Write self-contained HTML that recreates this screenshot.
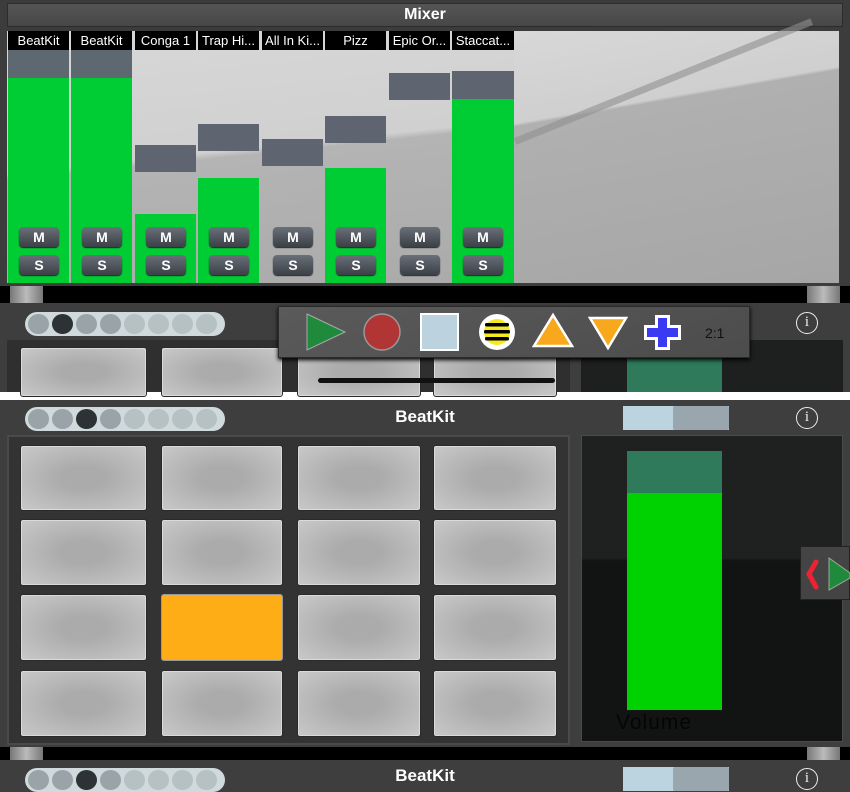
<!DOCTYPE html>
<html><head><meta charset="utf-8"><style>
*{margin:0;padding:0;box-sizing:border-box}
body{width:850px;height:792px;overflow:hidden;background:#fff;font-family:"Liberation Sans",sans-serif;position:relative}
.a{position:absolute}
.pill{position:absolute;width:200px;height:24px;background:#d0dadd;border-radius:12px}
.pill i{position:absolute;top:2px;width:21px;height:20px;border-radius:50%;background:#b6c1c4}
.pad{position:absolute;background:radial-gradient(ellipse at center,#ababab 25%,#c9c9c9 100%);border:1px solid #2a2a2a;border-radius:3px;box-shadow:inset 0 0 0 1px #dadada}
.name{position:absolute;top:31px;height:19px;background:#000;color:#fff;font-size:13px;text-align:center;line-height:19px;white-space:nowrap;overflow:hidden}
.btn{position:absolute;width:40px;height:20px;border-radius:4px;background:linear-gradient(#6a7078,#3b4047);color:#fff;font-weight:bold;font-size:14px;text-align:center;line-height:20px;box-shadow:0 1px 1px #222}
.info{position:absolute;width:22px;height:22px;border:1.5px solid #eee;border-radius:50%;color:#eee;font-size:15px;text-align:center;line-height:19px;font-family:"Liberation Serif",serif}
.foot{position:absolute;width:33px;background:linear-gradient(90deg,#777,#bbb,#777)}
</style></head><body>
<div class="a" style="left:0;top:0;width:850px;height:392px;background:#3c3c3c"></div>
<div class="a" style="left:7px;top:3px;width:836px;height:24px;background:linear-gradient(#555,#474747);border:1px solid #2c2c2c;color:#fff;font-weight:bold;font-size:16px;text-align:center;line-height:22px">Mixer</div>
<div class="a" style="left:7px;top:31px;width:832px;height:252px;background:linear-gradient(174deg,#d8d8d8 0%,#d0d0d0 42%,#b4b4b4 44%,#a8a8a8 100%)"></div>
<div class="a" style="left:514px;top:31px;width:325px;height:252px;background:linear-gradient(170deg,#d8d8d8 0%,#cfcfcf 30%,#b0b0b0 31%,#a6a6a6 100%)"></div>
<div class="a" style="left:515px;top:138px;width:320px;height:7px;background:#8f8f8f;transform:rotate(-22deg);transform-origin:left;opacity:.6"></div>
<div class="a" style="left:8px;top:50px;width:61px;height:28px;background:#5e6870"></div><div class="a" style="left:8px;top:78px;width:61px;height:205px;background:#00cc33"></div>
<div class="a" style="left:71px;top:50px;width:61px;height:28px;background:#5e6870"></div><div class="a" style="left:71px;top:78px;width:61px;height:205px;background:#00cc33"></div>
<div class="a" style="left:135px;top:145px;width:61px;height:27px;background:#5e6570"></div><div class="a" style="left:135px;top:214px;width:61px;height:69px;background:#00cc33"></div>
<div class="a" style="left:198px;top:124px;width:61px;height:27px;background:#5e6570"></div><div class="a" style="left:198px;top:178px;width:61px;height:105px;background:#00cc33"></div>
<div class="a" style="left:262px;top:139px;width:61px;height:27px;background:#5e6570"></div>
<div class="a" style="left:325px;top:116px;width:61px;height:27px;background:#5e6570"></div><div class="a" style="left:325px;top:168px;width:61px;height:115px;background:#00cc33"></div>
<div class="a" style="left:389px;top:73px;width:61px;height:27px;background:#5e6570"></div>
<div class="a" style="left:452px;top:71px;width:62px;height:28px;background:#5e6570"></div><div class="a" style="left:452px;top:99px;width:62px;height:184px;background:#00cc33"></div>
<div class="name" style="left:8px;width:61px">BeatKit</div>
<div class="name" style="left:71px;width:61px">BeatKit</div>
<div class="name" style="left:135px;width:61px">Conga 1</div>
<div class="name" style="left:198px;width:61px">Trap Hi...</div>
<div class="name" style="left:262px;width:61px">All In Ki...</div>
<div class="name" style="left:325px;width:61px">Pizz</div>
<div class="name" style="left:389px;width:61px">Epic Or...</div>
<div class="name" style="left:452px;width:62px">Staccat...</div>
<div class="btn" style="left:19px;top:227px">M</div><div class="btn" style="left:19px;top:255px">S</div>
<div class="btn" style="left:82px;top:227px">M</div><div class="btn" style="left:82px;top:255px">S</div>
<div class="btn" style="left:146px;top:227px">M</div><div class="btn" style="left:146px;top:255px">S</div>
<div class="btn" style="left:209px;top:227px">M</div><div class="btn" style="left:209px;top:255px">S</div>
<div class="btn" style="left:273px;top:227px">M</div><div class="btn" style="left:273px;top:255px">S</div>
<div class="btn" style="left:336px;top:227px">M</div><div class="btn" style="left:336px;top:255px">S</div>
<div class="btn" style="left:400px;top:227px">M</div><div class="btn" style="left:400px;top:255px">S</div>
<div class="btn" style="left:463px;top:227px">M</div><div class="btn" style="left:463px;top:255px">S</div>
<div class="a" style="left:0;top:286px;width:850px;height:17px;background:#000"></div>
<div class="foot" style="left:10px;top:286px;height:17px"></div>
<div class="foot" style="left:807px;top:286px;height:17px"></div>
<div class="a" style="left:0;top:303px;width:850px;height:89px;background:#3e3e3e"></div>
<div class="pill" style="left:25px;top:312px"><i style="left:3px;background:#9aa3a8"></i><i style="left:27px;background:#2d3335"></i><i style="left:51px;background:#9aa3a8"></i><i style="left:75px;background:#9aa3a8"></i><i style="left:99px"></i><i style="left:123px"></i><i style="left:147px"></i><i style="left:171px"></i></div>
<div class="info" style="left:796px;top:312px">i</div>
<div class="a" style="left:7px;top:340px;width:563px;height:52px;background:#2f2f2f"></div>
<div class="pad" style="left:20px;top:347px;width:127px;height:50px"></div>
<div class="pad" style="left:161px;top:347px;width:122px;height:50px"></div>
<div class="pad" style="left:297px;top:347px;width:124px;height:50px"></div>
<div class="pad" style="left:433px;top:347px;width:124px;height:50px"></div>
<div class="a" style="left:581px;top:340px;width:262px;height:52px;background:#1e1f1f"></div>
<div class="a" style="left:627px;top:355px;width:95px;height:37px;background:#2e7a5a"></div>
<div class="a" style="left:318px;top:378px;width:237px;height:5px;border-radius:3px;background:#111"></div>
<div class="a" style="left:278px;top:306px;width:472px;height:52px;background:linear-gradient(160deg,#5a5a5a,#4c4c4c);border:1px solid #2a2a2a;box-shadow:0 2px 4px #000"></div>
<svg class="a" style="left:278px;top:306px" width="472" height="52" viewBox="278 306 472 52">
<polygon points="307,314 345,332 307,350" fill="#1f8a3c" stroke="#aaa" stroke-width="1"/>
<circle cx="382" cy="332" r="18" fill="#b23535" stroke="#999" stroke-width="1.5"/>
<rect x="421" y="314" width="37" height="36" fill="#bcd3df" stroke="#fff" stroke-width="2"/>
<circle cx="497" cy="332" r="18" fill="#fff"/>
<circle cx="497" cy="332" r="13" fill="#f4ea1c"/>
<rect x="485" y="323" width="24" height="3.5" rx="1.5" fill="#000"/><rect x="484" y="330" width="26" height="3.5" rx="1.5" fill="#000"/><rect x="485" y="337" width="24" height="3.5" rx="1.5" fill="#000"/>
<polygon points="553,315 572,346 534,346" fill="#f8a81c" stroke="#fff" stroke-width="2.5"/>
<polygon points="590,318 626,318 608,348" fill="#f8a81c" stroke="#fff" stroke-width="2.5"/>
<path d="M655 315h15v10h11v15h-11v10h-15v-10h-11v-15h11z" fill="#fff"/>
<path d="M658 318h9v10h11v9h-11v10h-9v-10h-11v-9h11z" fill="#3a3af2"/>
<text x="705" y="338" font-size="14" font-family="Liberation Sans" fill="#111">2:1</text>
</svg>
<div class="a" style="left:0;top:400px;width:850px;height:392px;background:#3e3e3e"></div>
<div class="pill" style="left:25px;top:407px"><i style="left:3px;background:#9aa3a8"></i><i style="left:27px;background:#9aa3a8"></i><i style="left:51px;background:#2d3335"></i><i style="left:75px;background:#9aa3a8"></i><i style="left:99px"></i><i style="left:123px"></i><i style="left:147px"></i><i style="left:171px"></i></div>
<div class="a" style="left:325px;top:407px;width:200px;text-align:center;color:#fff;font-weight:bold;font-size:17px">BeatKit</div>
<div class="a" style="left:623px;top:406px;width:106px;height:24px;background:#bcd4e0"><div class="a" style="left:50px;top:0;width:56px;height:24px;background:#9aa6ad;border-radius:2px"></div></div>
<div class="info" style="left:796px;top:407px">i</div>
<div class="a" style="left:7px;top:435px;width:563px;height:310px;background:#333;border:2px solid #4a4a4a"></div>
<div class="pad" style="left:20px;top:445px;width:127px;height:66px"></div>
<div class="pad" style="left:161px;top:445px;width:122px;height:66px"></div>
<div class="pad" style="left:297px;top:445px;width:124px;height:66px"></div>
<div class="pad" style="left:433px;top:445px;width:124px;height:66px"></div>
<div class="pad" style="left:20px;top:519px;width:127px;height:67px"></div>
<div class="pad" style="left:161px;top:519px;width:122px;height:67px"></div>
<div class="pad" style="left:297px;top:519px;width:124px;height:67px"></div>
<div class="pad" style="left:433px;top:519px;width:124px;height:67px"></div>
<div class="pad" style="left:20px;top:594px;width:127px;height:67px"></div>
<div class="pad" style="left:161px;top:594px;width:122px;height:67px;background:#ffad17;box-shadow:none;border-color:#999"></div>
<div class="pad" style="left:297px;top:594px;width:124px;height:67px"></div>
<div class="pad" style="left:433px;top:594px;width:124px;height:67px"></div>
<div class="pad" style="left:20px;top:670px;width:127px;height:67px"></div>
<div class="pad" style="left:161px;top:670px;width:122px;height:67px"></div>
<div class="pad" style="left:297px;top:670px;width:124px;height:67px"></div>
<div class="pad" style="left:433px;top:670px;width:124px;height:67px"></div>
<div class="a" style="left:581px;top:435px;width:262px;height:307px;background:linear-gradient(#1f2020 0%,#1f2020 40%,#121414 41%);border:1px solid #4a4a4a"></div>
<div class="a" style="left:627px;top:451px;width:95px;height:42px;background:#2e7a5a"></div>
<div class="a" style="left:627px;top:493px;width:95px;height:217px;background:#00d100"></div>
<div class="a" style="left:616px;top:711px;font-size:21px;color:#050505;letter-spacing:1px">Volume</div>
<div class="a" style="left:800px;top:546px;width:50px;height:54px;background:#444;border:1px solid #222"></div>
<svg class="a" style="left:800px;top:546px" width="50" height="54">
<path d="M16 16 L9 28 L16 41" fill="none" stroke="#ee2233" stroke-width="5" stroke-linecap="round"/>
<polygon points="29,12 50,27 50,32 29,44" fill="#1f8a3c" stroke="#9a9" stroke-width="1"/>
</svg>
<div class="a" style="left:0;top:747px;width:850px;height:13px;background:#000"></div>
<div class="foot" style="left:10px;top:747px;height:13px"></div>
<div class="foot" style="left:807px;top:747px;height:13px"></div>
<div class="pill" style="left:25px;top:768px"><i style="left:3px;background:#9aa3a8"></i><i style="left:27px;background:#9aa3a8"></i><i style="left:51px;background:#2d3335"></i><i style="left:75px;background:#9aa3a8"></i><i style="left:99px"></i><i style="left:123px"></i><i style="left:147px"></i><i style="left:171px"></i></div>
<div class="a" style="left:325px;top:766px;width:200px;height:17px;overflow:hidden;text-align:center;color:#fff;font-weight:bold;font-size:17px">BeatKit</div>
<div class="a" style="left:623px;top:767px;width:106px;height:24px;background:#bcd4e0"><div class="a" style="left:50px;top:0;width:56px;height:24px;background:#9aa6ad;border-radius:2px"></div></div>
<div class="info" style="left:796px;top:768px">i</div>
</body></html>
